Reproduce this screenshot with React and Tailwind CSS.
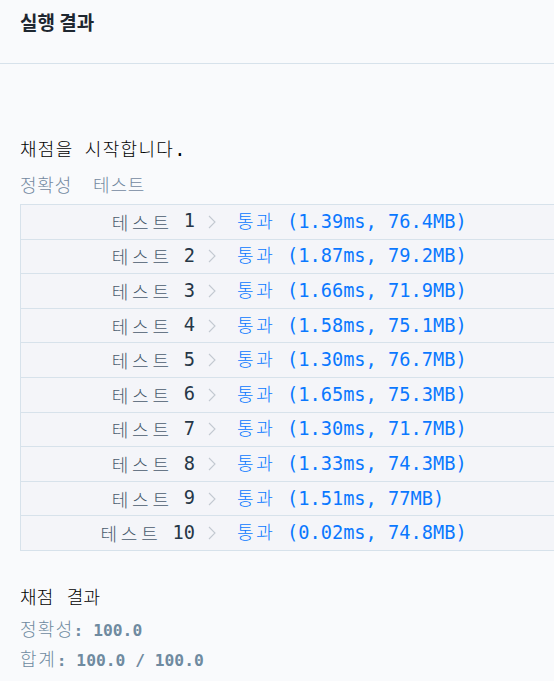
import React from 'react'

const rows = [
  [1, '1.39ms', '76.4MB'],
  [2, '1.87ms', '79.2MB'],
  [3, '1.66ms', '71.9MB'],
  [4, '1.58ms', '75.1MB'],
  [5, '1.30ms', '76.7MB'],
  [6, '1.65ms', '75.3MB'],
  [7, '1.30ms', '71.7MB'],
  [8, '1.33ms', '74.3MB'],
  [9, '1.51ms', '77MB'],
  [10, '0.02ms', '74.8MB'],
]

const mono = "font-['DejaVu_Sans_Mono','Noto_Sans_CJK_KR',monospace]"

// korean text, spaced out to the wider pitch of the screenshot
const K = ({ children, className = '' }) => (
  <span className={`font-['Noto_Sans_CJK_KR',sans-serif] text-[18px] font-light leading-none ${className}`}>
    {children}
  </span>
)

const Chevron = () => (
  <svg width="8" height="14" viewBox="0 0 8 14" className="block">
    <polyline points="1,1 7,7 1,13" fill="none" stroke="#c3c9d1" strokeWidth="1.1" />
  </svg>
)

const Row = ({ n, time, mem }) => (
  <div className="flex h-[34.6px] items-center border-t border-[#d7e2eb] bg-[#f4f5f9]">
    <div className="flex w-[174px] shrink-0 items-center justify-end whitespace-pre text-[#4a5b6d]">
      <K className="tracking-[3.8px]">테스트</K>
      <span className={`${mono} ml-[11px] text-[18.67px] leading-none text-[#263747]`}>{n}</span>
    </div>
    <div className="ml-[13px] w-[8px] shrink-0">
      <Chevron />
    </div>
    <div className="ml-[21px] whitespace-pre text-[#0a78ff]">
      <K className="tracking-[2.8px]">통과</K>
      <span className={`${mono} text-[18.67px] leading-none`}>{` (${time}, ${mem})`}</span>
    </div>
  </div>
)

const App = () => (
  <div className="min-h-screen w-full overflow-hidden bg-[#f9fafc]">
    <div className="h-[64px] border-b border-[#d7e2eb] px-5 pt-[11px]">
      <h1 className="font-['Noto_Sans_CJK_KR',sans-serif] text-[19px] font-bold leading-[22px] text-[#1e2730]">
        실행 결과
      </h1>
    </div>

    <div className="px-5 pt-[73px]">
      <div className="flex h-[26px] items-center whitespace-pre text-black">
        <span>
          <K className="tracking-[1.3px]">채점을</K>
          <span className={`${mono} text-[18.67px] leading-none`}> </span>
          <K className="tracking-[1.3px]">시작합니다</K>
          <span className={`${mono} text-[18.67px] leading-none`}>.</span>
        </span>
      </div>
      <div className="mt-[8px] flex h-[26px] items-center whitespace-pre text-[#7389a0]">
        <K className="tracking-[0.8px]">정확성</K>
        <K className="ml-[21px] tracking-[0.8px]">테스트</K>
      </div>

      <div className="mt-[7px] w-[600px] border-b border-l border-[#d7e2eb]">
        {rows.map(([n, time, mem]) => (
          <Row key={n} n={n} time={time} mem={mem} />
        ))}
      </div>

      <div className="mt-[32px] flex h-[26px] items-center whitespace-pre text-black">
        <K className="tracking-[0.3px]">채점</K>
        <K className="ml-[13px] tracking-[0.3px]">결과</K>
      </div>
      <div className="mt-[8px] flex h-[26px] items-center whitespace-pre text-[#6f8aa0]">
        <span>
          <K className="tracking-[1.3px]">정확성</K>
          <span className={`${mono} text-[16.3px] font-bold leading-none`}>: 100.0</span>
        </span>
      </div>
      <div className="mt-[4px] flex h-[26px] items-center whitespace-pre text-[#6f8aa0]">
        <span>
          <K className="tracking-[1.8px]">합계</K>
          <span className={`${mono} text-[16.3px] font-bold leading-none`}>: 100.0 / 100.0</span>
        </span>
      </div>
    </div>
  </div>
)

export default App
